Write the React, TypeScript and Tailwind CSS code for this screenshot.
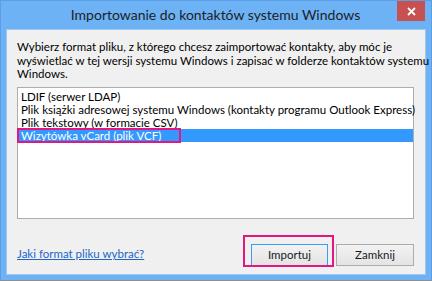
export default function App() {
  return (
    <div className="w-[432px] h-[281px] bg-[#6cb2f5] border-x border-t border-[#5a9fe6] border-b border-b-[#8f8f8f] flex flex-col font-['Lato',sans-serif]">
      <div className="h-[28px] grid grid-cols-[33px_1fr_34px] shrink-0">
        <div />
        <div className="flex items-center justify-center text-[14px] text-[#1e1e1e] pb-[2px] whitespace-nowrap">
          Importowanie do kontaktów systemu Windows
        </div>
        <div className="flex items-start">
          <div className="w-[28px] h-[20px] bg-[#c75050] flex items-center justify-center">
            <svg width="9" height="9" viewBox="0 0 9 9">
              <path d="M1 1L8 8M8 1L1 8" stroke="white" strokeWidth="1.8" />
            </svg>
          </div>
        </div>
      </div>

      <div className="mx-[5px] h-[246px] border border-[#9ec8f0] bg-[#f0f0f0] flex flex-col pt-[10px] pl-[10px] pr-[11px] pb-[8px]">
        <p className="text-[11.5px] leading-[13.5px] text-black whitespace-nowrap">
          Wybierz format pliku, z którego chcesz zaimportować kontakty, aby móc je
          <br />
          wyświetlać w tej wersji systemu Windows i zapisać w folderze kontaktów systemu
          <br />
          Windows.
        </p>

        <div className="mt-[6px] h-[132px] border border-[#abadb3] bg-white pt-[2px] text-[11.5px] leading-[13px] text-black whitespace-nowrap">
          <div className="px-[3px]">LDIF (serwer LDAP)</div>
          <div className="px-[3px]">Plik książki adresowej systemu Windows (kontakty programu Outlook Express)</div>
          <div className="px-[3px]">Plik tekstowy (w formacie CSV)</div>
          <div className="relative px-[3px] bg-[#3399ff] text-white">
            Wizytówka vCard (plik VCF)
            <div className="absolute -left-px -top-px w-[164px] h-[15px] border-2 border-[#e3177f]" />
          </div>
        </div>

        <div className="flex-1" />

        <div className="flex items-end">
          <a className="text-[11.5px] text-[#1b66c9] underline mb-[4px] whitespace-nowrap">Jaki format pliku wybrać?</a>
          <div className="flex-1" />
          <div className="relative">
            <button className="w-[77px] h-[22px] border border-[#3c9bf2] bg-gradient-to-b from-[#f2f2f2] to-[#e4e4e4] text-[11.5px] text-[#1a1a1a]">
              Importuj
            </button>
            <div className="absolute -left-[8px] -top-[6px] w-[91px] h-[32px] border-2 border-[#e3177f]" />
          </div>
          <button className="ml-[8px] w-[78px] h-[22px] border border-[#acacac] bg-gradient-to-b from-[#f2f2f2] to-[#e4e4e4] text-[11.5px] text-[#1a1a1a]">
            Zamknij
          </button>
        </div>
      </div>
    </div>
  );
}
